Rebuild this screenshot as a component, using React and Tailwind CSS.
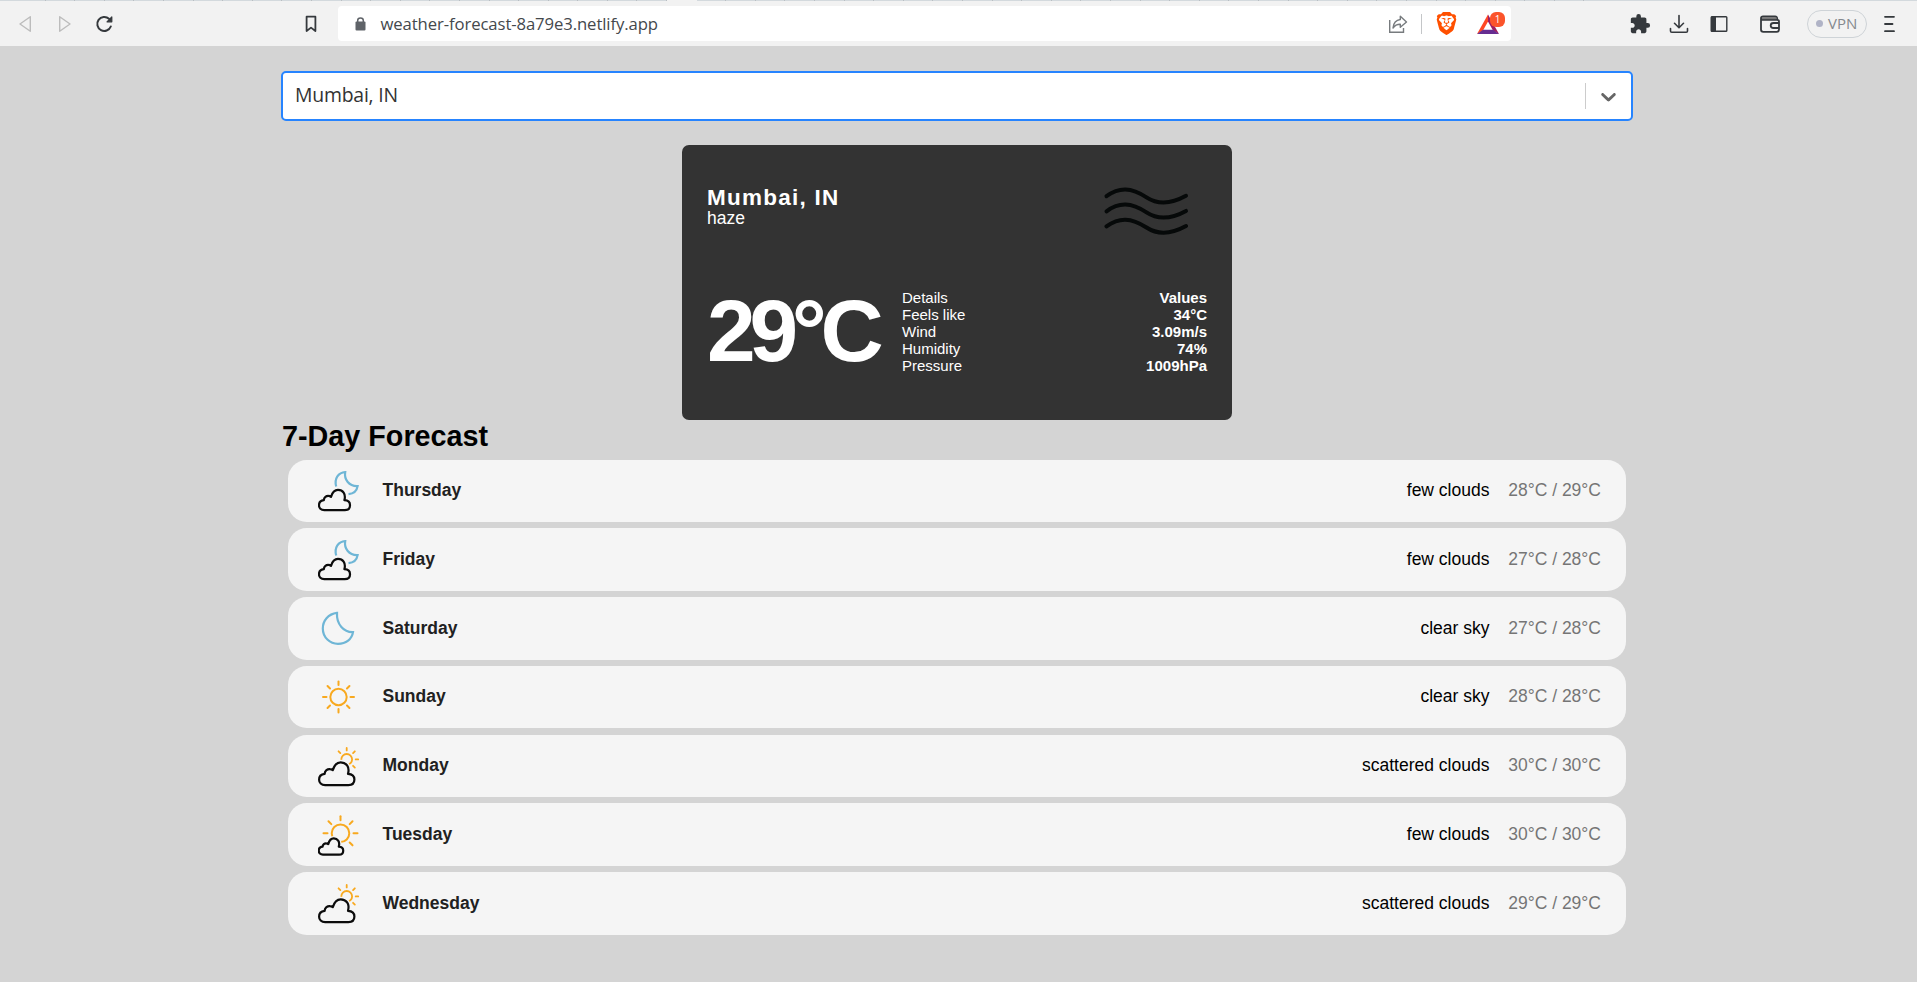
import React from "react";
import { SiBrave } from "react-icons/si";
import { MdExtension } from "react-icons/md";

const ORANGE = "#f8a91f";
const BLUE = "#6fb6d6";
const INK = "#35393d";
const ALL_RAYS = [0, 45, 90, 135, 180, 225, 270, 315];
const CLOUD =
  "M6.5 22 C3 22 1 19.8 1 17 C1 14 3 12 6 11.7 C6.2 8.8 8.6 7.2 10.8 7.4 C11.8 7.4 12.6 7.8 13.4 8.4 C14.8 3.6 17.6 1.2 20.6 1.2 C25.5 1.2 29 5.2 27.2 11.7 C31.3 11.9 33 14 33 16.9 C33 20 31 22 27.500 22 Z";

function Cloud({ x, y, w, h }) {
  return (
    <svg x={x} y={y} width={w} height={h} viewBox="0 0 34 23" preserveAspectRatio="none" overflow="visible">
      <path d={CLOUD} fill="#f5f5f5" stroke="#f5f5f5" strokeWidth="5" vectorEffect="non-scaling-stroke" />
      <path d={CLOUD} fill="#f5f5f5" stroke="#0c0c0c" strokeWidth="2.2" strokeLinejoin="round" vectorEffect="non-scaling-stroke" />
    </svg>
  );
}

function Sun({ cx, cy, r, inner, outer, rays, width = 2 }) {
  return (
    <g fill="none" stroke={ORANGE} strokeWidth={width} strokeLinecap="round">
      <circle cx={cx} cy={cy} r={r} />
      {rays.map((a) => {
        const t = (a * Math.PI) / 180;
        return (
          <line
            key={a}
            x1={cx + inner * Math.cos(t)}
            y1={cy + inner * Math.sin(t)}
            x2={cx + outer * Math.cos(t)}
            y2={cy + outer * Math.sin(t)}
          />
        );
      })}
    </g>
  );
}

function WeatherIcon({ kind }) {
  return (
    <svg className="h-[62px] w-[62px] shrink-0" viewBox="0 0.5 62 62">
      {kind === "night-few" && (
        <>
          <path
            d="M18.200 27 C16 19 20.500 13 27.200 12.600 C26 20 31 27 39.600 26.600 C38.800 31.500 35.500 34.200 30.500 34.600"
            fill="none"
            stroke={BLUE}
            strokeWidth="2.2"
          />
          <Cloud x="0" y="29.3" w="33" h="22.3" />
        </>
      )}
      {kind === "night-clear" && (
        <path
          d="M19 16.400 C10 17.500 4.800 24.500 4.800 32 C4.800 41 12 47.300 20 47.300 C28 47.300 34 42.500 35 35.600 C26 36 18.300 28 19 16.400 Z"
          fill="none"
          stroke={BLUE}
          strokeWidth="2.2"
        />
      )}
      {kind === "day-clear" && <Sun cx={20.5} cy={31.5} r={8.2} inner={12} outer={15.5} rays={ALL_RAYS} />}
      {kind === "day-scattered" && (
        <>
          <Sun cx={28.7} cy={24.9} r={5.4} inner={9} outer={11.5} rays={[0, 45, 225, 270, 315]} width={1.8} />
          <Cloud x="0" y="26.5" w="37.5" h="25.2" />
        </>
      )}
      {kind === "day-few" && (
        <>
          <Sun cx={22.5} cy={29.8} r={8.8} inner={13} outer={17} rays={[0, 45, 180, 225, 270, 315]} />
          <Cloud x="0" y="34" w="26" h="18" />
        </>
      )}
    </svg>
  );
}

const forecast = [
  ["Thursday", "few clouds", "28°C / 29°C", "night-few"],
  ["Friday", "few clouds", "27°C / 28°C", "night-few"],
  ["Saturday", "clear sky", "27°C / 28°C", "night-clear"],
  ["Sunday", "clear sky", "28°C / 28°C", "day-clear"],
  ["Monday", "scattered clouds", "30°C / 30°C", "day-scattered"],
  ["Tuesday", "few clouds", "30°C / 30°C", "day-few"],
  ["Wednesday", "scattered clouds", "29°C / 29°C", "day-scattered"],
];

const details = [
  ["Details", "Values"],
  ["Feels like", "34°C"],
  ["Wind", "3.09m/s"],
  ["Humidity", "74%"],
  ["Pressure", "1009hPa"],
];

function TabStrip() {
  return (
    <div className="flex h-px bg-[#d3d9dd]">
      <div className="w-4 shrink-0" />
      {Array.from({ length: 53 }, (_, i) => (
        <div
          key={i}
          className={
            i === 22 ? "w-[29.6px] shrink-0 bg-[#f2f2f2]" : "w-[29.6px] shrink-0 border-r border-[#b9bec2]"
          }
        />
      ))}
    </div>
  );
}

function Toolbar() {
  return (
    <header className="flex h-[45px] items-center bg-[#f2f2f2] font-['Open_Sans','Noto_Sans',sans-serif]">
      <svg className="ml-[18px] h-[18px] w-[14px] shrink-0" viewBox="0 0 14 18" fill="none">
        <path d="M12.300 1.700 V16.300 L2 9 Z" stroke="#bcbcbc" strokeWidth="1.400" strokeLinejoin="round" />
      </svg>
      <svg className="ml-[26px] h-[18px] w-[14px] shrink-0" viewBox="0 0 14 18" fill="none">
        <path d="M1.700 1.700 V16.300 L12 9 Z" stroke="#bcbcbc" strokeWidth="1.400" strokeLinejoin="round" />
      </svg>
      <svg className="ml-[23px] h-[18px] w-[18px] shrink-0" viewBox="0 0 18 18" fill="none">
        <path d="M15.800 11.500 A7 7 0 1 1 14 3.800" stroke={INK} strokeWidth="2" strokeLinecap="round" />
        <path d="M16.800 2 V6.800 H12 Z" fill={INK} stroke={INK} strokeWidth="1.200" strokeLinejoin="round" />
      </svg>
      <svg className="ml-[191px] h-[18px] w-[14px] shrink-0" viewBox="0 0 14 18" fill="none">
        <path d="M2.600 1.700 H11.400 V16 L7 12.600 L2.600 16 Z" stroke={INK} strokeWidth="1.800" strokeLinejoin="round" />
      </svg>

      <div className="ml-[20px] flex h-[35px] w-[1173px] shrink-0 items-center rounded-[4px] bg-white">
        <svg className="ml-[17px] h-[16px] w-[11px] shrink-0" viewBox="0 0 11 16">
          <path d="M2.700 7 V4.500 Q2.700 2 5.500 2 Q8.300 2 8.300 4.500 V7" fill="none" stroke="#5f6368" strokeWidth="1.500" />
          <rect x="0.500" y="5.500" width="10" height="9" rx="1" fill="#5f6368" />
        </svg>
        <span className="ml-[14.5px] text-[16.7px] leading-6 tracking-[-0.1px] text-[#44484c]">
          weather-forecast-8a79e3.netlify.app
        </span>
        <svg className="ml-auto h-[20px] w-[20px] shrink-0" viewBox="0 0 20 20" fill="none" stroke="#777b7e" strokeWidth="1.400">
          <path d="M1.700 6 V18.300 H15.500 V14" />
          <path d="M12.300 2.300 L18.500 8 L12.300 13.300 V10.300 C9 10.200 7 11.200 5 14 C5.500 9 8 6 12.300 5.500 Z" strokeLinejoin="round" />
        </svg>
        <div className="ml-[13px] h-5 w-px bg-[#c4c6c8]" />
        <SiBrave className="ml-[13px] h-[23px] w-[23px] shrink-0 text-[#ff5000]" />
        <div className="relative ml-[18px] mr-[5px] h-[24px] w-[30px] shrink-0">
          <svg className="h-[24px] w-[24px]" viewBox="0 0 24 24">
            <path d="M12 2.500 L1 22 L7 18.500 L12 9.500 Z" fill="#ff4724" />
            <path d="M12 2.500 L23 22 L17 18.500 L12 9.500 Z" fill="#9e1f63" />
            <path d="M1 22 L7 17.800 H17 L23 22 Z" fill="#662d91" />
          </svg>
          <span className="absolute left-[14px] top-0 flex h-[15px] w-[15px] items-center justify-center rounded-[6px] bg-[#fb542b] text-[10px] leading-none text-white">
            1
          </span>
        </div>
      </div>

      <MdExtension className="ml-[118px] h-[22px] w-[22px] shrink-0 text-[#35393d]" />
      <svg className="ml-[18px] h-[20px] w-[20px] shrink-0" viewBox="0 0 20 20" fill="none" stroke={INK} strokeWidth="1.600" strokeLinecap="round" strokeLinejoin="round">
        <path d="M10 1.500 V13.500 M5.500 9.300 L10 13.700 L14.500 9.300 M1.500 14.500 V17 Q1.500 18.300 2.800 18.300 H17.200 Q18.500 18.300 18.500 17 V14.500" />
      </svg>
      <svg className="ml-[21px] h-[18px] w-[18px] shrink-0" viewBox="0 0 18 18">
        <rect x="1.200" y="1.700" width="15.600" height="14.600" rx="0.800" fill="none" stroke={INK} strokeWidth="1.400" />
        <rect x="1" y="1.500" width="5" height="15" fill={INK} />
      </svg>
      <svg className="ml-[31px] h-[20px] w-[22px] shrink-0" viewBox="0 0 22 20" fill="none" stroke={INK} strokeWidth="1.800">
        <path d="M2 4.500 V15.500 Q2 17.800 4.300 17.800 H17.700 Q20 17.800 20 15.500 V7.500 Q20 5.800 18 5.800 H3.500 Q2 5.800 2 4.200 Q2 2.500 4 2.500 H16 Q18.300 2.500 18.300 5.500" />
        <path d="M3 4.200 H17.500" stroke="#777" strokeWidth="2" />
        <path d="M20 9 H14.500 Q11.700 9 11.700 11.500 Q11.700 14 14.500 14 H20" />
      </svg>
      <div className="ml-[26px] flex h-[28px] w-[60px] shrink-0 items-center rounded-full border border-[#ced3d7]">
        <div className="ml-2 h-[7px] w-[7px] shrink-0 rounded-full bg-[#b0b3c6]" />
        <span className="ml-[5px] pb-px text-[15px] leading-5 text-[#84898e]">VPN</span>
      </div>
      <svg className="ml-4 h-[18px] w-[13px] shrink-0" viewBox="0 0 13 18" stroke={INK} strokeWidth="1.800" strokeLinecap="round">
        <path d="M2 1.800 H11 M2 9 H9.500 M2 16.200 H11" />
      </svg>
    </header>
  );
}

function LocationSelect() {
  return (
    <div className="mt-[25px] flex h-[50px] items-center rounded-[5px] border-2 border-[#2684ff] bg-white">
      <span className="ml-3 pb-[2px] font-['Open_Sans','Noto_Sans',sans-serif] text-[19.4px] leading-7 tracking-[-0.2px] text-[#333]">
        Mumbai, IN
      </span>
      <div className="ml-auto h-[26px] w-px bg-[#ccc]" />
      <svg className="mx-[10px] h-[25px] w-[25px]" viewBox="0 0 20 20" fill="#666">
        <path d="M4.516 7.548c0.436-0.446 1.043-0.481 1.576 0l3.908 3.747 3.908-3.747c0.533-0.481 1.141-0.446 1.574 0 0.436 0.445 0.408 1.197 0 1.615-0.406 0.418-4.695 4.502-4.695 4.502-0.217 0.223-0.502 0.335-0.787 0.335s-0.570-0.112-0.789-0.335c0 0-4.287-4.084-4.695-4.502s-0.436-1.170 0-1.615z" />
      </svg>
    </div>
  );
}

function CurrentWeather() {
  return (
    <section className="ml-[401px] mt-[24px] h-[275px] w-[550px] rounded-[7px] bg-[#333] px-[25px] pt-[41px] text-white">
      <div className="flex h-[41px] justify-between">
        <div>
          <p className="text-[22.5px] font-bold leading-[23px] tracking-[1.25px]">Mumbai, IN</p>
          <p className="text-[17.5px] leading-[18px]">haze</p>
        </div>
        <svg className="mr-[17px] h-[54px] w-[88px]" viewBox="1102 186.500 88 54" fill="none" stroke="#060909" strokeWidth="4" strokeLinecap="round">
          {[0, 15.1, 30.2].map((dy) => (
            <path
              key={dy}
              transform={`translate(0 ${dy})`}
              d="M1106.500 196.700 C1119 187.500 1131 187.500 1146.500 197.800 C1159 206 1172 204 1186 196.300"
            />
          ))}
        </svg>
      </div>
      <div className="mt-[60px] flex">
        <p className="w-[195px] shrink-0 text-[87.5px] font-bold leading-[88px] tracking-[-6.25px]">29°C</p>
        <div className="mt-[2px] grow text-[15px] leading-[17px]">
          {details.map(([label, value]) => (
            <div key={label} className="flex justify-between">
              <span>{label}</span>
              <span className="font-bold">{value}</span>
            </div>
          ))}
        </div>
      </div>
    </section>
  );
}

export default function App() {
  return (
    <div className="h-[982px] overflow-hidden bg-[#d4d4d4] font-['Liberation_Sans',Arial,sans-serif] text-black">
      <TabStrip />
      <Toolbar />
      <main className="ml-[281px] w-[1352px]">
        <LocationSelect />
        <CurrentWeather />
        <h1 className="ml-px text-[28.75px] font-bold leading-[33px]">7-Day Forecast</h1>
        <div className="mx-[7px] mt-[6.5px] flex flex-col gap-[6.25px]">
          {forecast.map(([day, description, range, icon]) => (
            <div
              key={day}
              className="flex h-[62.5px] items-center rounded-[18.75px] bg-[#f5f5f5] pl-[30px] pr-[25px] text-[17.5px] leading-5"
            >
              <WeatherIcon kind={icon} />
              <span className="ml-[2.5px] pb-[1.5px] font-bold text-[#212121]">{day}</span>
              <span className="ml-auto pb-[1.5px]">{description}</span>
              <span className="ml-[18.75px] pb-[1.5px] text-[#757575]">{range}</span>
            </div>
          ))}
        </div>
      </main>
    </div>
  );
}
